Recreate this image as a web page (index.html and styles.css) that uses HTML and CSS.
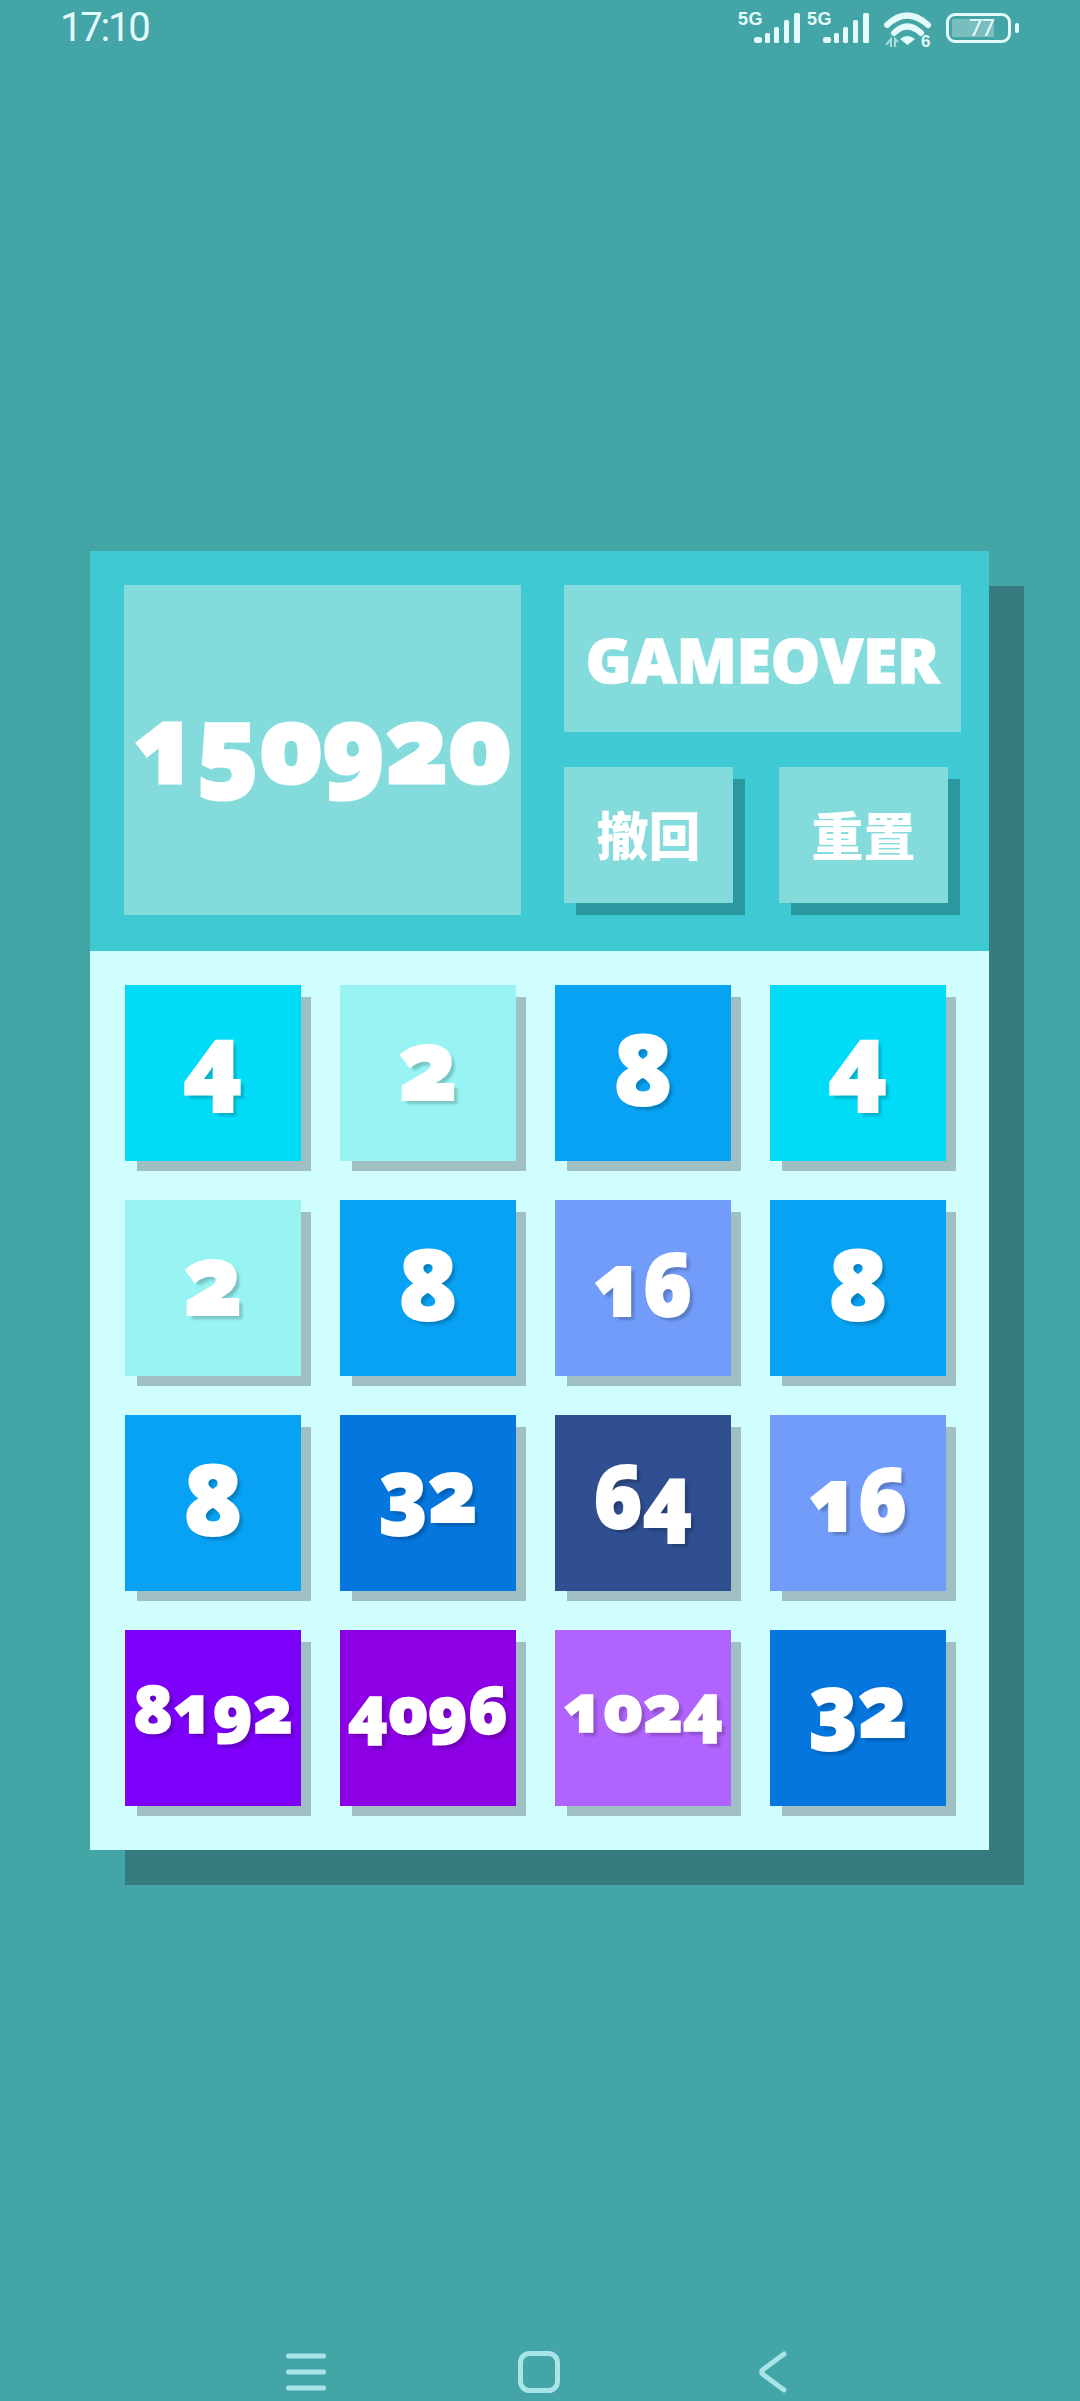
FILE: index.html
```html
<!DOCTYPE html>
<html lang="zh">
<head>
<meta charset="utf-8">
<title>2048</title>
<link rel="stylesheet" href="styles.css">
</head>
<body>
<div class="status">
  <span class="clock">17:10</span>
  <div class="status-icons">
    <svg class="sig" viewBox="0 -6 63 40"><text x="0" y="12" class="sig-t">5G</text><rect x="16" y="24" width="8" height="6" rx="2.5"/><rect x="27" y="20" width="5" height="10" rx="1.5"/><rect x="36" y="14" width="5" height="16" rx="1.5"/><rect x="46" y="7" width="5" height="23" rx="1.5"/><rect x="56" y="0" width="6" height="30" rx="1.5"/></svg>
    <svg class="sig" viewBox="0 -6 63 40"><text x="0" y="12" class="sig-t">5G</text><rect x="16" y="24" width="8" height="6" rx="2.5"/><rect x="27" y="20" width="5" height="10" rx="1.5"/><rect x="36" y="14" width="5" height="16" rx="1.5"/><rect x="46" y="7" width="5" height="23" rx="1.5"/><rect x="56" y="0" width="6" height="30" rx="1.5"/></svg>
    <svg class="wifi" viewBox="0 0 48 40"><path class="arc" d="M3 13 Q23 -6 44 13"/><path class="arc" d="M10 21 Q23 8 37 21"/><path class="fan" d="M16 27 Q23 21 31 27 L23.500 33 Z"/><path class="faint" d="M2 33 L7 27 V35 M11 35 V27 L14 30"/><text x="37" y="35" class="wifi-t">6</text></svg>
    <div class="batt"><div class="batt-fill"></div><span class="batt-t">77</span></div>
    <span class="batt-nub"></span>
  </div>
</div>

<main class="panel">
  <section class="head">
    <div class="score box"><span class="score-num">150920</span></div>
    <div class="side">
      <div class="over box">GAMEOVER</div>
      <div class="btns">
        <button class="btn box"><span class="btn-t">撤回</span></button>
        <button class="btn box"><span class="btn-t">重置</span></button>
      </div>
    </div>
  </section>
  <section class="grid">
    <div class="tile t1 c4"><span>4</span></div><div class="tile t1 c2"><span>2</span></div><div class="tile t1 c8"><span>8</span></div><div class="tile t1 c4"><span>4</span></div>
    <div class="tile t1 c2"><span>2</span></div><div class="tile t1 c8"><span>8</span></div><div class="tile t2 c16"><span>16</span></div><div class="tile t1 c8"><span>8</span></div>
    <div class="tile t1 c8"><span>8</span></div><div class="tile t2 c32"><span>32</span></div><div class="tile t2 c64"><span>64</span></div><div class="tile t2 c16"><span>16</span></div>
    <div class="tile t4 c8192"><span>8192</span></div><div class="tile t4 c4096"><span>4096</span></div><div class="tile t4 c1024"><span>1024</span></div><div class="tile t2 c32"><span>32</span></div>
  </section>
</main>

<nav class="nav">
  <svg class="nav-menu" viewBox="0 0 40 38"><path d="M2.500 3H37.500M2.500 19H37.500M2.500 35H37.500"/></svg>
  <svg class="nav-home" viewBox="0 0 42 42"><rect x="2.500" y="2.500" width="37" height="37" rx="9"/></svg>
  <svg class="nav-back" viewBox="0 0 28 42"><path d="M25 3 L3.500 19 Q2 21 3.500 23 L25 39"/></svg>
</nav>
</body>
</html>
```
FILE: styles.css
```css
* { box-sizing: border-box; }
html, body { margin: 0; padding: 0; }
body {
  width: 1080px;
  height: 2401px;
  overflow: hidden;
  background: #44a5a7;
  display: flex;
  flex-direction: column;
  font-family: "Open Sans", "Noto Sans CJK SC", sans-serif;
}

/* status bar */
.status {
  height: 60px;
  display: flex;
  align-items: flex-start;
  justify-content: space-between;
  padding: 3px 61px 0 60px;
  color: #e4fbfb;
}
.clock {
  font-family: Roboto, sans-serif;
  font-size: 40px;
  line-height: 50px;
  letter-spacing: -2.200px;
}
.status-icons { display: flex; align-items: flex-start; padding-top: 4px; }
.sig { width: 63px; height: 40px; margin-right: 6px; fill: #e4fbfb; }
.sig + .sig { margin-right: 14px; }
.sig-t { font: 700 18px "Liberation Sans", sans-serif; letter-spacing: .5px; }
.wifi { width: 48px; height: 40px; margin-right: 14px; margin-top: 5px; fill: none; }
.arc { fill: none; stroke: #e4fbfb; stroke-width: 6px; stroke-linecap: round; }
.fan { fill: #e4fbfb; }
.faint { fill: none; stroke: #a9dcdc; stroke-width: 2px; }
.wifi-t { font: 700 17px "Liberation Sans", sans-serif; fill: #e4fbfb; }
.batt {
  position: relative;
  width: 65px;
  height: 30px;
  margin-top: 6px;
  border: 3.500px solid #e4fbfb;
  border-radius: 9px;
  display: flex;
  align-items: center;
  justify-content: flex-end;
  padding-right: 14px;
}
.batt-fill { position: absolute; left: 3px; top: 3px; bottom: 3px; width: 42px; background: rgba(255,255,255,.28); }
.batt-t { position: relative; font: 400 24px/22px Roboto, sans-serif; letter-spacing: -1px; color: #e4fbfb; }
.batt-nub { width: 4px; height: 10px; margin: 16px 0 0 4px; border-radius: 2px; background: #e4fbfb; }

/* panel */
.panel {
  width: 899px;
  margin: 491px 0 0 90px;
  box-shadow: 35px 35px 0 #367b7e;
}
.head {
  height: 400px;
  background: #3fcad3;
  display: flex;
  gap: 43px;
  padding: 34px 0 0 34px;
}
.box { background: #84dbdc; color: #fff; }
.score {
  width: 397px;
  height: 330px;
  padding-bottom: 18px;
  display: flex;
  align-items: center;
  justify-content: center;
  font-size: 107px;
  font-weight: 800;
  -webkit-text-stroke: 3px #fff;
}
.score-num, .tile span {
  display: inline-block;
  font-feature-settings: "onum" 1;
  font-variant-numeric: oldstyle-nums;
}
.score-num { transform: scaleX(.97); }
.side { width: 397px; }
.over {
  height: 147px;
  display: flex;
  align-items: center;
  justify-content: center;
  font-size: 62px;
  font-weight: 800;
  -webkit-text-stroke: 1.500px #fff;
}
.btns { display: flex; gap: 46px; margin-top: 35px; }
.btn {
  width: 169px;
  height: 136px;
  border: 0;
  padding: 0 0 4px;
  font-family: "Noto Sans CJK SC", sans-serif;
  font-size: 52px;
  font-weight: 900;
  box-shadow: 12px 12px 0 #2b979f;
}
.btn-t { display: block; }

/* grid */
.grid {
  background: #d0fdfe;
  display: grid;
  grid-template-columns: repeat(4, 176px);
  grid-auto-rows: 176px;
  gap: 39px;
  padding: 34px 0 44px 35px;
}
.tile {
  display: flex;
  align-items: center;
  justify-content: center;
  color: #fff;
  font-weight: 800;
  -webkit-text-stroke: 2px #fff;
  box-shadow: 11px 11px 0 -1px #a0bfc2;
  text-shadow: 4px 4px 3px rgba(0,0,0,.2);
}
.t1 { font-size: 98px; }
.t2 { font-size: 86px; }
.t2 span { transform: scaleX(.95); }
.t4 { font-size: 66px; -webkit-text-stroke-width: 1.500px; }
.c2 { background: #97f4f3; padding-bottom: 22px; }
.c4 { background: #00dcf8; padding-bottom: 30px; }
.c8 { background: #07a2f4; padding-bottom: 12px; }
.c16 { background: #719cf9; padding-bottom: 12px; }
.c32 { background: #0476de; padding-bottom: 30px; }
.c64 { background: #2f4f90; padding-bottom: 18px; }
.c1024 { background: #b163fd; padding-bottom: 24px; }
.c4096 { background: #8d00e6; padding-bottom: 20px; }
.c8192 { background: #7d00fa; padding-bottom: 22px; }

/* nav */
.nav {
  margin-top: auto;
  height: 50px;
  margin-bottom: 4px;
  display: flex;
  align-items: center;
}
.nav svg { fill: none; stroke: #a8e4e8; stroke-width: 5px; stroke-linecap: round; }
.nav-menu { width: 40px; height: 38px; margin-left: 286px; }
.nav-home { width: 42px; height: 42px; margin-left: 192px; }
.nav-back { width: 28px; height: 42px; margin-left: 199px; }
```
